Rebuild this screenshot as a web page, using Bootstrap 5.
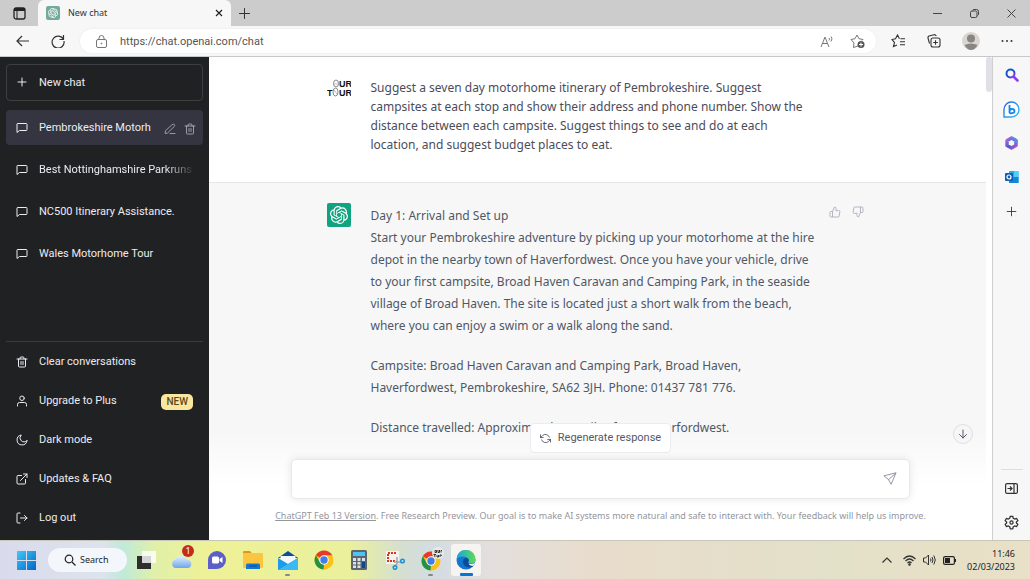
<!DOCTYPE html>
<html lang="en">
<head>
<meta charset="utf-8">
<meta name="viewport" content="width=device-width, initial-scale=1">
<title>New chat</title>
<link href="https://cdn.jsdelivr.net/npm/bootstrap@5.3.0/dist/css/bootstrap.min.css" rel="stylesheet">
<style>
  body { font-family: "Noto Sans", "Open Sans", sans-serif; font-size: 12px; color: #343541; }
  button { font: inherit; color: inherit; background: none; border: 0; padding: 0; }
  svg { display: block; flex: none; }
  .line-icon { fill: none; stroke: currentColor; stroke-width: 2; stroke-linecap: round; stroke-linejoin: round; }
  .thin { stroke-width: 1.6; }
  .icon-btn { display: flex; align-items: center; justify-content: center; }

  /* browser frame */
  .tab-strip { height: 26px; background: #ccc; }
  .tab-menu { width: 38px; }
  .open-tab { width: 193px; height: 26px; background: #f7f7f7; border-radius: 6px 6px 0 0; font-size: 9px; color: #333; }
  .new-tab { margin-left: 6px; }
  .window-buttons { width: 111px; }
  .window-buttons > button { flex: 1; color: #444; }
  .toolbar { height: 31px; background: #f7f7f7; border-bottom: 1px solid #c8c8c8; color: #333; padding: 0 5px 0 4px; }
  .page-nav > button { width: 36px; }
  .page-nav { margin-right: 4px; }
  .address { height: 24px; background: #fff; border-radius: 12px; box-shadow: 0 0 2px #e4e4e4; padding: 0 11px 0 16px; }
  .address input { border: 0; outline: 0; background: none; padding: 0; margin-left: 13px; min-width: 0; font: 11px Roboto, sans-serif; color: #555; }
  .toolbar-tools { width: 145px; }
  .toolbar-tools > button { flex: 1; }

  /* conversation list */
  .sidebar { width: 209px; background: #202123; color: #ececf1; font-family: Roboto, sans-serif; font-size: 11px; padding: 7px 6px 3px; }
  .side-row { display: flex; align-items: center; gap: 11px; width: 100%; height: 35px; padding: 2px 10px 0; border-radius: 4px; color: inherit; text-decoration: none; white-space: nowrap; overflow: hidden; }
  .side-row > svg { margin-bottom: 2px; }
  .new-chat { height: 37px; border: 1px solid #3d3e42; padding: 1px 9px 0; }
  .chosen { background: #343541; padding-right: 7px; }
  .row-tools { gap: 8px; color: #b4b4c4; }
  .history { gap: 7px; margin-top: 9px; }
  .fading { overflow: hidden; -webkit-mask-image: linear-gradient(90deg, #000 82%, rgba(0,0,0,.1)); mask-image: linear-gradient(90deg, #000 82%, rgba(0,0,0,.1)); }
  .side-foot { border-top: 1px solid #3a3b3f; }
  .side-foot .side-row { height: 39px; }
  .plus-tag { background: #fae69e; color: #5a4a1a; font-size: 10px; font-weight: 500; line-height: 16px; border-radius: 5px; padding: 0 5px; }

  /* conversation */
  .chat-pane { background: #fff; }
  .turn { border-bottom: 1px solid #e6e6e8; color: #4b4c5a; }
  .turn-reply { background: #f7f7f8; color: #505765; border: 0; }
  .turn-inner { max-width: 542px; gap: 20px; }
  .turn-text { flex: 0 1 447px; }
  .ask { line-height: 19px; padding: 21px 0 28px; margin: 0; }
  .answer { line-height: 22px; padding-top: 22px; }
  .answer p { margin-bottom: 18px; }
  .avatar { width: 24px; height: 24px; }
  .ask-avatar { margin-top: 19px; }
  .reply-avatar { margin-top: 20px; background: #10a37f; border-radius: 2px; }
  .votes { color: #b4b5c4; margin-top: 23px; margin-left: -9px; gap: 11px; }
  .composer { background: linear-gradient(rgba(255,255,255,0) 18%, #fff 58%); padding: 16px 0 0 6px; }
  .regen { height: 30px; background: #fff; border: 1px solid #ececf0; border-radius: 4px; color: #565869; font-family: Roboto, sans-serif; font-size: 11px; padding: 0 9px; gap: 7px; margin-bottom: 6px; }
  .prompt-box { max-width: 619px; height: 40px; background: #fff; border: 1px solid #e9e9ec; border-radius: 5px; box-shadow: 0 0 8px rgba(0,0,0,.1); color: #8e8ea0; }
  .prompt-box textarea { border: 0; outline: 0; resize: none; height: 20px; background: none; }
  .fine-print { font-size: 9px; line-height: 14px; color: #94959d; margin: 10px 0 17px; white-space: nowrap; }
  .fine-print a { color: inherit; }
  .to-bottom { right: 13px; bottom: 96px; width: 20px; height: 20px; border: 1px solid #dfdfe3; border-radius: 50%; background: #f6f6f7; color: #565869; }
  .scroll-track { width: 7px; background: #fff; border-right: 1px solid #d0d0d0; }
  .scroll-thumb { height: 35px; background: #e0e0e6; border-radius: 3px; }

  /* browser side rail */
  .rail { width: 37px; background: #f7f7f7; color: #333; padding: 9px 0 9px; }
  .rail button { height: 18px; width: 100%; }
  .rail hr { width: 22px; margin: 0 auto 9px; color: #999; }

  /* desktop task bar */
  .taskbar { height: 39px; border-top: 1px solid #c6c7b8; color: #222; font-size: 9px;
    background: linear-gradient(90deg, #d9dbec 0, #dde3ec 10%, #bfead9 12%, #e0f0a8 15%, #eef196 20%, #eaf09c 34%, #d5dfd0 39%, #d3dce2 42%, #e4dfdc 48%, #e8dccb 58%, #e3e0c9 80%, #e9e0c6 100%); }
  .task-search { width: 79px; height: 24px; border-radius: 12px; background: #f3f6fa; margin-left: 12px; }
  .task-search input { width: 36px; border: 0; outline: 0; background: none; padding: 0; font-size: 9px; color: #222; }
  .task-search input::placeholder { color: #222; opacity: 1; }
  .task-apps { width: 356px; margin-left: 1px; display: grid; grid-template-columns: repeat(10, 1fr); height: 100%; padding: 3px 0; }
  .task-apps > button { position: relative; border-radius: 3px; margin: 0 3px; }
  .app-open::after { content: ""; position: absolute; bottom: 0; left: 50%; width: 5px; height: 2px; margin-left: -3px; border-radius: 1px; background: #85888a; }
  .app-front { background: #f6f3f1; }
  .app-front::after { width: 13px; height: 3px; margin-left: -6px; background: #0a74d0; }
  .note-count { top: 1px; right: 2px; width: 12px; height: 12px; border-radius: 50%; background: #c42b1c; color: #fff; font-size: 9px; line-height: 12px; text-align: center; }
  .tray { gap: 7px; margin-right: 15px; }
  .clock { font-size: 9px; line-height: 13px; text-align: right; }
</style>
</head>
<body>
<svg width="0" height="0" class="position-absolute" aria-hidden="true">
  <defs>
    <symbol id="bubble" viewBox="0 0 24 24"><path d="M22 16a1 1 0 0 1-1 1H7l-5 4V4a1 1 0 0 1 1-1h18a1 1 0 0 1 1 1z"/></symbol>
    <symbol id="bin" viewBox="0 0 24 24"><path d="M2 6h20M19 6v14a2 2 0 0 1-2 2H7a2 2 0 0 1-2-2V6m3 0V4a2 2 0 0 1 2-2h4a2 2 0 0 1 2 2v2M10 11v6M14 11v6"/></symbol>
    <symbol id="plus" viewBox="0 0 24 24"><path d="M12 4v16M4 12h16"/></symbol>
    <symbol id="knot" viewBox="0 0 24 24"><path d="M22.2819 9.8211a5.9847 5.9847 0 0 0-.5157-4.9108 6.0462 6.0462 0 0 0-6.5098-2.9A6.0651 6.0651 0 0 0 4.9807 4.1818a5.9847 5.9847 0 0 0-3.9977 2.9 6.0462 6.0462 0 0 0 .7427 7.0966 5.98 5.98 0 0 0 .511 4.9107 6.051 6.051 0 0 0 6.5146 2.9001A5.9847 5.9847 0 0 0 13.2599 24a6.0557 6.0557 0 0 0 5.7718-4.2058 5.9894 5.9894 0 0 0 3.9977-2.9001 6.0557 6.0557 0 0 0-.7475-7.0729zm-9.022 12.6081a4.4755 4.4755 0 0 1-2.8764-1.0408l.1419-.0804 4.7783-2.7582a.7948.7948 0 0 0 .3927-.6813v-6.7369l2.02 1.1686a.071.071 0 0 1 .038.052v5.5826a4.504 4.504 0 0 1-4.4945 4.4944zm-9.6607-4.1254a4.4708 4.4708 0 0 1-.5346-3.0137l.142.0852 4.783 2.7582a.7712.7712 0 0 0 .7806 0l5.8428-3.3685v2.3324a.0804.0804 0 0 1-.0332.0615L9.74 19.9502a4.4992 4.4992 0 0 1-6.1408-1.6464zM2.3408 7.8956a4.485 4.485 0 0 1 2.3655-1.9728V11.6a.7664.7664 0 0 0 .3879.6765l5.8144 3.3543-2.0201 1.1685a.0757.0757 0 0 1-.071 0l-4.8303-2.7865A4.504 4.504 0 0 1 2.3408 7.872zm16.5963 3.8558L13.1038 8.364 15.1192 7.2a.0757.0757 0 0 1 .071 0l4.8303 2.7913a4.4944 4.4944 0 0 1-.6765 8.1042v-5.6772a.79.79 0 0 0-.407-.667zm2.0107-3.0231l-.142-.0852-4.7735-2.7818a.7759.7759 0 0 0-.7854 0L9.409 9.2297V6.8974a.0662.0662 0 0 1 .0284-.0615l4.8303-2.7866a4.4992 4.4992 0 0 1 6.6802 4.66zM8.3065 12.863l-2.02-1.1638a.0804.0804 0 0 1-.038-.0567V6.0742a4.4992 4.4992 0 0 1 7.3757-3.4537l-.142.0805L8.704 5.459a.7948.7948 0 0 0-.3927.6813zm1.0976-2.3654l2.602-1.4998 2.6069 1.4998v2.9994l-2.5974 1.4997-2.6067-1.4997Z"/></symbol>
    <symbol id="thumb" viewBox="0 0 24 24"><path d="M14 9V5a3 3 0 0 0-3-3l-4 9v11h11.3a2 2 0 0 0 2-1.7l1.4-9a2 2 0 0 0-2-2.300zM7 22H4a2 2 0 0 1-2-2v-7a2 2 0 0 1 2-2h3"/></symbol>
    <symbol id="chrome" viewBox="0 0 20 20"><circle cx="10" cy="10" r="9.500" fill="#fbc116"/><path d="M10 10 1.800 5.200A9.500 9.500 0 0 1 18.200 5.200H10z" fill="#e33b2e"/><path d="M1.800 5.200 6 12.400 10 14.500 9.500 19.500A9.500 9.500 0 0 1 1.800 5.200z" fill="#229342"/><circle cx="10" cy="10" r="4.700" fill="#fff"/><circle cx="10" cy="10" r="3.700" fill="#3f7de8"/></symbol>
    <linearGradient id="winBlue" x2="1" y2="1"><stop stop-color="#45c7f8"/><stop offset="1" stop-color="#0067c8"/></linearGradient>
    <linearGradient id="edgeTop" x2="1" y2="0"><stop stop-color="#19a4e4"/><stop offset="1" stop-color="#5fda57"/></linearGradient>
    <linearGradient id="lens" x2="1" y2="1"><stop stop-color="#0b62d6"/><stop offset=".6" stop-color="#2447c8"/><stop offset="1" stop-color="#a53cf0"/></linearGradient>
    <linearGradient id="bing" x2="1" y2="1"><stop stop-color="#2b62e8"/><stop offset="1" stop-color="#2ec5ee"/></linearGradient>
    <linearGradient id="office" x2="1" y2="1"><stop stop-color="#b06be8"/><stop offset=".5" stop-color="#4f5cc8"/><stop offset="1" stop-color="#b45ac8"/></linearGradient>
    <linearGradient id="cloud" x2="0" y2="1"><stop stop-color="#e5f1fd"/><stop offset="1" stop-color="#6da6ea"/></linearGradient>
  </defs>
</svg>

<div class="d-flex flex-column vh-100 overflow-hidden">

  <header>
    <div class="tab-strip d-flex align-items-center">
      <button class="icon-btn tab-menu" aria-label="Tab actions">
        <svg width="13" height="13" viewBox="0 0 13 13"><rect x="1" y="1" width="11" height="11" rx="2" fill="none" stroke="#222" stroke-width="1.300"/><path d="M1 2.500Q1 1 2.500 1h8Q12 1 12 2.500V4H1z" fill="#222"/><path d="M4 4v8" stroke="#222"/></svg>
      </button>
      <div class="open-tab d-flex align-items-center">
        <svg class="ms-2" width="14" height="14" viewBox="0 0 14 14"><rect width="14" height="14" rx="2" fill="#74aa9c"/><use href="#knot" x="2" y="2" width="10" height="10" fill="#fff"/></svg>
        <span class="flex-grow-1 ms-2">New chat</span>
        <button class="icon-btn me-2" aria-label="Close tab"><svg width="8" height="8" viewBox="0 0 8 8" stroke="#222" stroke-width="1.200"><path d="M1 1l6 6M7 1 1 7"/></svg></button>
      </div>
      <button class="icon-btn new-tab" aria-label="New tab"><svg class="line-icon thin" width="15" height="15" color="#333"><use href="#plus"/></svg></button>
      <div class="window-buttons d-flex ms-auto">
        <button class="icon-btn" aria-label="Minimise"><svg width="9" height="9" viewBox="0 0 9 9" stroke="currentColor"><path d="M0 4.500h9"/></svg></button>
        <button class="icon-btn" aria-label="Restore"><svg width="9" height="9" viewBox="0 0 9 9" fill="none" stroke="currentColor"><rect x=".5" y="2" width="6.500" height="6.500" rx="1.500"/><path d="M2.500 1.500Q3 .5 4 .5h2.500q2 0 2 2V5q0 1-1 1.500"/></svg></button>
        <button class="icon-btn" aria-label="Close"><svg width="9" height="9" viewBox="0 0 9 9" stroke="currentColor"><path d="M.5.5l8 8M8.500.5l-8 8"/></svg></button>
      </div>
    </div>
    <div class="toolbar d-flex align-items-center">
      <div class="page-nav d-flex">
        <button class="icon-btn" aria-label="Back"><svg width="13" height="12" viewBox="0 0 13 12" fill="none" stroke="currentColor" stroke-width="1.200"><path d="M13 6H1M6 1 1 6l5 5"/></svg></button>
        <button class="icon-btn" aria-label="Refresh"><svg width="14" height="14" viewBox="0 0 14 14" fill="none" stroke="currentColor" stroke-width="1.200"><path d="M12.500 5.500A6 6 0 1 0 13 7M12.500 1v4.500H8.500"/></svg></button>
      </div>
      <div class="address d-flex align-items-center flex-grow-1 me-1">
        <svg width="11" height="13" viewBox="0 0 11 13" fill="none" stroke="#777"><rect x=".5" y="4.500" width="10" height="8" rx="1.500"/><path d="M3 4.500V3a2.500 2.500 0 0 1 5 0v1.500"/><circle cx="5.500" cy="8.500" r=".5"/></svg>
        <input class="flex-grow-1" type="text" aria-label="Address" value="https://chat.openai.com/chat">
        <button class="icon-btn me-3" aria-label="Read aloud"><svg width="14" height="13" viewBox="0 0 14 13" fill="none" stroke="#777"><path d="M1 12 5 2l4 10M2.500 8.500h5M9 3q1 1 0 2.500M11 1.500q2 2 0 5"/></svg></button>
        <button class="icon-btn" aria-label="Add to favourites"><svg width="15" height="15" viewBox="0 0 15 15" fill="none" stroke="#777"><path d="M8 12 3.500 13.500 4 9 1 5.500l4-.8L7 1l2 3.700 4 .8-1 1"/><circle cx="11" cy="10.500" r="3.500" fill="#555" stroke="none"/><path d="M11 8.500v4M9 10.500h4" stroke="#fff"/></svg></button>
      </div>
      <div class="toolbar-tools d-flex">
        <button class="icon-btn" aria-label="Favourites"><svg width="15" height="14" viewBox="0 0 15 14" fill="none" stroke="currentColor" stroke-width="1.100"><path d="M6 11 2.500 12.500 3.500 8.500 1 5.500l3.500-.7L6.500 1l2 3.700M9.500 4.700H14M9 7.700h5M9 10.700h5"/></svg></button>
        <button class="icon-btn" aria-label="Collections"><svg width="14" height="14" viewBox="0 0 14 14" fill="none" stroke="currentColor" stroke-width="1.100"><rect x="4" y="4" width="9" height="9" rx="2"/><path d="M8.500 6.200v4.600M6.200 8.500h4.600M2.500 9.500 1 4Q.7 2.600 2 2l5-1.300Q8.500.5 9.300 2"/></svg></button>
        <button class="icon-btn" aria-label="Profile"><svg width="18" height="18" viewBox="0 0 18 18"><circle cx="9" cy="9" r="9" fill="#d9d5d1"/><circle cx="9" cy="6.500" r="4" fill="#8a8580"/><path d="M2.500 13Q9 10 15.500 13 13 18 9 18T2.500 13z" fill="#8a8580"/></svg></button>
        <button class="icon-btn" aria-label="Settings and more"><svg width="12" height="4" viewBox="0 0 12 4" fill="currentColor"><circle cx="1.500" cy="2" r="1"/><circle cx="6" cy="2" r="1"/><circle cx="10.500" cy="2" r="1"/></svg></button>
      </div>
    </div>
  </header>

  <div class="d-flex flex-grow-1 overflow-hidden">
    <nav class="sidebar d-flex flex-column flex-shrink-0" aria-label="Conversations">
      <button class="side-row new-chat flex-shrink-0"><svg class="line-icon" width="12" height="12"><use href="#plus"/></svg>New chat</button>
      <div class="history d-flex flex-column">
        <div class="side-row chosen">
          <svg class="line-icon" width="12" height="12"><use href="#bubble"/></svg>
          <span class="flex-grow-1">Pembrokeshire Motorh</span>
          <div class="row-tools d-flex">
            <button class="icon-btn" aria-label="Rename"><svg class="line-icon thin" width="12" height="12" viewBox="0 0 24 24"><path d="M12 21h10M16.500 3a2.500 2.500 0 0 1 4 4L7 20l-5 1 1-5z"/></svg></button>
            <button class="icon-btn" aria-label="Delete"><svg class="line-icon thin" width="12" height="12"><use href="#bin"/></svg></button>
          </div>
        </div>
        <a href="#" class="side-row"><svg class="line-icon" width="12" height="12"><use href="#bubble"/></svg><span class="fading">Best Nottinghamshire Parkruns</span></a>
        <a href="#" class="side-row"><svg class="line-icon" width="12" height="12"><use href="#bubble"/></svg>NC500 Itinerary Assistance.</a>
        <a href="#" class="side-row"><svg class="line-icon" width="12" height="12"><use href="#bubble"/></svg>Wales Motorhome Tour</a>
      </div>
      <div class="side-foot mt-auto">
        <a href="#" class="side-row"><svg class="line-icon" width="12" height="12"><use href="#bin"/></svg>Clear conversations</a>
        <a href="#" class="side-row"><svg class="line-icon" width="12" height="12" viewBox="0 0 24 24"><path d="M21 22v-3a4 4 0 0 0-4-4H7a4 4 0 0 0-4 4v3"/><circle cx="12" cy="6.500" r="4.500"/></svg><span class="flex-grow-1">Upgrade to Plus</span><span class="plus-tag">NEW</span></a>
        <a href="#" class="side-row"><svg class="line-icon" width="12" height="12" viewBox="0 0 24 24"><path d="M22 13.500A10 10 0 1 1 10.500 2 8 8 0 0 0 22 13.500z"/></svg>Dark mode</a>
        <a href="#" class="side-row"><svg class="line-icon" width="12" height="12" viewBox="0 0 24 24"><path d="M19 13v7a2 2 0 0 1-2 2H4a2 2 0 0 1-2-2V7a2 2 0 0 1 2-2h7M15 2h7v7M9 15 22 2"/></svg>Updates &amp; FAQ</a>
        <a href="#" class="side-row"><svg class="line-icon" width="12" height="12" viewBox="0 0 24 24"><path d="M8 22H4a2 2 0 0 1-2-2V4a2 2 0 0 1 2-2h4M17 17l5-5-5-5M22 12H9"/></svg>Log out</a>
      </div>
    </nav>

    <main class="chat-pane position-relative flex-grow-1 d-flex flex-column overflow-hidden">
      <section class="turn flex-shrink-0">
        <div class="turn-inner d-flex mx-auto">
          <svg class="avatar ask-avatar" viewBox="0 0 24 24" font-family="Liberation Sans Narrow, Liberation Sans, sans-serif" font-weight="700" font-size="9" fill="#111" role="img" aria-label="Our Tour"><text x="12" y="11">UR</text><text x="0" y="20">T</text><text x="12" y="20">UR</text><g fill="none" stroke="#888"><ellipse cx="9" cy="7.500" rx="2.500" ry="3.500"/><ellipse cx="8.500" cy="16" rx="2.500" ry="4"/><path d="M7 8h4M7 14l3 4" stroke="#bbb"/></g></svg>
          <p class="turn-text ask">Suggest a seven day motorhome itinerary of Pembrokeshire. Suggest campsites at each stop and show their address and phone number. Show the distance between each campsite. Suggest things to see and do at each location, and suggest budget places to eat.</p>
        </div>
      </section>
      <section class="turn turn-reply flex-grow-1 overflow-hidden">
        <div class="turn-inner d-flex mx-auto">
          <svg class="avatar reply-avatar" viewBox="0 0 24 24" role="img" aria-label="ChatGPT"><use href="#knot" x="3" y="3" width="18" height="18" fill="#fff"/></svg>
          <div class="turn-text answer">
            <p>Day 1: Arrival and Set up<br>Start your Pembrokeshire adventure by picking up your motorhome at the hire depot in the nearby town of Haverfordwest. Once you have your vehicle, drive to your first campsite, Broad Haven Caravan and Camping Park, in the seaside village of Broad Haven. The site is located just a short walk from the beach, where you can enjoy a swim or a walk along the sand.</p>
            <p>Campsite: Broad Haven Caravan and Camping Park, Broad Haven, Haverfordwest, Pembrokeshire, SA62 3JH. Phone: 01437 781 776.</p>
            <p>Distance travelled: Approximately 20 miles from Haverfordwest.</p>
          </div>
          <div class="votes d-flex align-items-start">
            <button class="icon-btn" aria-label="Good response"><svg class="line-icon" width="12" height="12"><use href="#thumb"/></svg></button>
            <button class="icon-btn" aria-label="Bad response"><svg class="line-icon" width="12" height="12" viewBox="0 0 24 24"><g transform="rotate(180 12 12)"><use href="#thumb" width="24" height="24"/></g></svg></button>
          </div>
        </div>
      </section>

      <div class="composer position-absolute bottom-0 start-0 end-0 d-flex flex-column align-items-center">
        <button class="regen d-flex align-items-center"><svg class="line-icon" width="11" height="11" viewBox="0 0 24 24"><path d="M1 4v6h6M23 20v-6h-6M20.500 9A9 9 0 0 0 5.600 5.600L1 10m22 4-4.600 4.400A9 9 0 0 1 3.500 15"/></svg>Regenerate response</button>
        <form class="prompt-box d-flex align-items-center w-100 px-2">
          <textarea class="flex-grow-1" rows="1" aria-label="Message"></textarea>
          <button type="button" class="icon-btn me-1" aria-label="Send"><svg class="line-icon thin" width="14" height="14" viewBox="0 0 24 24"><path d="M22 2 14 21l-4.500-8L2 7zM22 2 9.500 13"/></svg></button>
        </form>
        <p class="fine-print"><a href="#">ChatGPT Feb 13 Version</a>. Free Research Preview. Our goal is to make AI systems more natural and safe to interact with. Your feedback will help us improve.</p>
      </div>
      <button class="to-bottom icon-btn position-absolute" aria-label="Scroll to bottom"><svg class="line-icon" width="12" height="12" viewBox="0 0 24 24"><path d="M12 4v16M19 13l-7 7-7-7"/></svg></button>
    </main>
    <div class="scroll-track flex-shrink-0"><div class="scroll-thumb"></div></div>

    <aside class="rail d-flex flex-column flex-shrink-0" aria-label="Browser sidebar">
      <button class="icon-btn" aria-label="Search"><svg width="14" height="14" viewBox="0 0 14 14" fill="none" stroke="url(#lens)"><circle cx="5.500" cy="5.500" r="4" stroke-width="2"/><path d="M8.500 8.500 12.500 12.500" stroke="#8a3df0" stroke-width="2.500" stroke-linecap="round"/></svg></button>
      <button class="icon-btn mt-3" aria-label="Bing chat"><svg width="17" height="17" viewBox="0 0 17 17"><path d="M1 16V8.500a7.500 7.500 0 1 1 7.500 7.500z" fill="#fff" stroke="url(#bing)" stroke-width="1.400"/><path d="M6.500 4v7.500M6.500 11q0-3 2.500-3t2.500 2-2.500 2.200-2.500-1" fill="none" stroke="#1b87e5" stroke-width="1.800"/></svg></button>
      <button class="icon-btn mt-3" aria-label="Microsoft 365"><svg width="15" height="16" viewBox="0 0 15 16"><path d="M7.500 3 12 5.500v5L7.500 13 3 10.500v-5z" fill="#f7f7f7" stroke="url(#office)" stroke-width="3.500" stroke-linejoin="round"/><path d="M7 2.500 12 5.300v3" fill="none" stroke="#5a8ae0" stroke-width="2.500"/></svg></button>
      <button class="icon-btn mt-3" aria-label="Outlook"><svg width="14" height="14" viewBox="0 0 14 14"><rect x="4" y="1" width="9.500" height="12" rx="1" fill="#28a8ea"/><path d="M4 7h9.500v6H4z" fill="#1686d8"/><path d="M9 1h4.500v6H9z" fill="#50d0f5"/><rect y="3" width="8" height="8" rx="1" fill="#0f5fb5"/><circle cx="4" cy="7" r="2" fill="none" stroke="#fff" stroke-width="1.200"/></svg></button>
      <button class="icon-btn mt-3" aria-label="Add"><svg class="line-icon thin" width="13" height="13"><use href="#plus"/></svg></button>
      <div class="mt-auto">
        <hr>
        <button class="icon-btn" aria-label="Hide sidebar"><svg width="13" height="11" viewBox="0 0 13 11" fill="none" stroke="currentColor" stroke-width="1.200"><rect x=".6" y=".6" width="11.800" height="9.800" rx="1.500"/><path d="M9 .5v10M2.500 5.500H7M5 3.500l2 2-2 2"/></svg></button>
        <button class="icon-btn mt-3" aria-label="Settings"><svg class="line-icon" width="15" height="15" viewBox="0 0 24 24"><circle cx="12" cy="12" r="2.500"/><path d="M10 2h4l.8 3.200 2.200 1.300 3.200-1 2 3.500-2.400 2.300v1.400l2.400 2.300-2 3.500-3.200-1-2.200 1.300L14 22h-4l-.8-3.200L7 17.500l-3.200 1-2-3.500 2.400-2.300v-1.400L1.800 9l2-3.500 3.200 1 2.200-1.300z"/></svg></button>
      </div>
    </aside>
  </div>

  <footer class="taskbar d-flex align-items-center flex-shrink-0">
    <button class="icon-btn ms-3" aria-label="Start"><svg width="20" height="20" viewBox="0 0 20 20" fill="url(#winBlue)"><path d="M1 1h9v9H1zM11 1h9v9h-9zM1 11h9v9H1zM11 11h9v9h-9z"/></svg></button>
    <label class="task-search d-flex align-items-center gap-1 ps-3"><svg width="12" height="12" viewBox="0 0 12 12" fill="none" stroke="#222" stroke-width="1.200"><circle cx="5" cy="5" r="3.800"/><path d="m8 8 3.500 3.500"/></svg><input type="text" placeholder="Search" aria-label="Search"></label>
    <div class="task-apps">
      <button class="icon-btn" aria-label="Task view"><svg width="20" height="20" viewBox="0 0 20 20"><rect x="1" y="6" width="14" height="13" fill="#2e2e2e"/><rect x="6" y="1" width="14" height="12" fill="#fff" opacity=".8"/></svg></button>
      <button class="icon-btn" aria-label="Weather"><svg width="21" height="20" viewBox="0 0 21 20"><path d="M5 18a4.300 4.300 0 0 1-.3-8.500A6 6 0 0 1 16 10a4 4 0 0 1 .5 8z" fill="url(#cloud)"/></svg><span class="note-count position-absolute">1</span></button>
      <button class="icon-btn" aria-label="Chat"><svg width="20" height="20" viewBox="0 0 20 20"><path d="M1 19V10a9 9 0 1 1 9 9z" fill="#5b5fc7"/><rect x="5" y="6.500" width="7" height="7" rx="1.500" fill="#fff"/><path d="m12.500 9 3-2v6l-3-2z" fill="#fff"/></svg></button>
      <button class="icon-btn" aria-label="File Explorer"><svg width="20" height="18" viewBox="0 0 20 18"><path d="M0 1q0-1 1-1h6l2 2.500H0z" fill="#d99a1c"/><rect y="2" width="20" height="15" rx="1" fill="#fcc53f"/><path d="M3 18v-4q0-1.500 1.500-1.500h11q1.500 0 1.500 1.500v4z" fill="#1377cf"/><path d="M6 15h8" stroke="#0a4a92"/></svg></button>
      <button class="icon-btn app-open" aria-label="Mail"><svg width="20" height="19" viewBox="0 0 20 19"><path d="M0 7 10 0l10 7z" fill="#0b4f9b"/><path d="M2.500 5h15v9h-15z" fill="#f4f8fc"/><path d="M0 7l10 6 10-6v12H0z" fill="#1d9be8"/><path d="M0 19 20 7v12z" fill="#3cb8f4"/></svg></button>
      <button class="icon-btn" aria-label="Chrome"><svg width="20" height="20"><use href="#chrome"/></svg></button>
      <button class="icon-btn" aria-label="Calculator"><svg width="16" height="20" viewBox="0 0 16 20"><rect width="16" height="20" rx="1.500" fill="#5b6670"/><rect x="2" y="2" width="12" height="4" fill="#4fc4f0"/><path d="M2 8h3v3H2zM6.500 8h3v3h-3zM11 8h3v3h-3zM2 12h3v2.500H2zM6.500 12h3v2.500h-3zM2 15.500h3V18H2zM6.500 15.500h3V18h-3z" fill="#dde2e6"/><path d="M11 12h3v6h-3z" fill="#104a86"/></svg></button>
      <button class="icon-btn" aria-label="Snipping Tool"><svg width="20" height="20" viewBox="0 0 20 20"><rect x="1" y="1" width="13" height="13" fill="#f4f1ef"/><path d="M11 3H3v8h8" fill="none" stroke="#d8391e" stroke-width="2" stroke-dasharray="2 1"/><path d="M12 7v7l-3 3M9 12h7" stroke="#9aa5ad" stroke-width="1.500" fill="none"/><g fill="none" stroke="#1a8fdc" stroke-width="1.500"><circle cx="10" cy="17.500" r="1.800"/><circle cx="17.500" cy="11" r="1.800"/></g></svg></button>
      <button class="icon-btn app-open" aria-label="Chrome, Our Tour profile"><svg width="26" height="26" viewBox="0 0 26 26"><use href="#chrome" x="3" y="4" width="20" height="20"/><circle cx="20" cy="6" r="6" fill="#e9e9e6"/><path d="M17 3.500h1.500v2H17zM20 3v2.500h1.500V3M23 5.500V3.500h1M15.500 7.500h2.500M16.800 7.500v2.500M19 8v2h1.500V8M22 10V8h1.500l-.5 1" fill="none" stroke="#333"/></svg></button>
      <button class="icon-btn app-open app-front" aria-label="Edge"><svg width="20" height="20" viewBox="0 0 20 20"><circle cx="10" cy="10" r="9.500" fill="#1375cf"/><path d="M.5 9A9.500 9.500 0 0 1 19.500 9.500q0 4-4.500 4-3 0-2.500-1.500 1-3-1.500-4.500Q6 5 .5 9z" fill="url(#edgeTop)"/><path d="M12.500 12q1-3-1.500-4-4 0-4 4 .5 5 6 5.500 3 0 5-2.500-5 2-5.500-3z" fill="#0a4c9c"/><path d="M12.500 12q-1 2 3 2 3 0 4-2.500l-1.500 4q-5 1.500-5.500-3.500z" fill="#f6f3f1"/></svg></button>
    </div>
    <div class="tray d-flex align-items-center ms-auto">
      <button class="icon-btn me-1" aria-label="Show hidden icons"><svg width="10" height="6" viewBox="0 0 10 6" fill="none" stroke="#333" stroke-width="1.200"><path d="m.5 5.500 4.500-4.500 4.500 4.500"/></svg></button>
      <button class="icon-btn" aria-label="Network"><svg width="13" height="11" viewBox="0 0 13 11" fill="none" stroke="#333" stroke-width="1.200"><path d="M.5 4q6-6 12 0M2.500 6q4-4 8 0M4.500 8q2-2 4 0"/><circle cx="6.500" cy="9.500" r=".7" fill="#333"/></svg></button>
      <button class="icon-btn" aria-label="Volume"><svg width="13" height="12" viewBox="0 0 13 12" fill="none" stroke="#333"><path d="M.5 4v4h2L5.500 11V1L2.500 4zM7.500 4.500q1 1.500 0 3M9 3q2 3 0 6M10.800 1.500q3 4.500 0 9"/></svg></button>
      <button class="icon-btn" aria-label="Battery"><svg width="13" height="9" viewBox="0 0 13 9"><rect x=".6" y=".6" width="10.800" height="7.800" rx="1.500" fill="none" stroke="#222" stroke-width="1.200"/><path d="M2 2h5v5H2z" fill="#222"/><path d="M12.500 3v3" stroke="#222"/></svg></button>
      <div class="clock ms-1">11:46<br>02/03/2023</div>
    </div>
  </footer>
</div>
<script src="https://cdn.jsdelivr.net/npm/bootstrap@5.3.0/dist/js/bootstrap.bundle.min.js"></script>
</body>
</html>
